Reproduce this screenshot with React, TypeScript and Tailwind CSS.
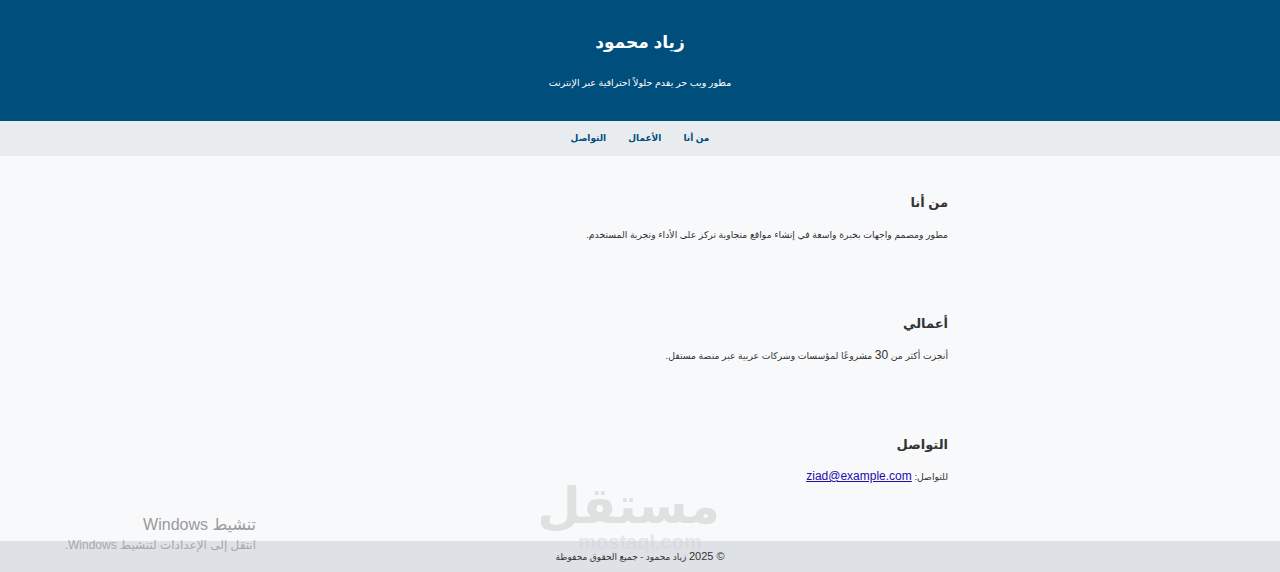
export default function App() {
  return (
    <div
      dir="rtl"
      className="relative min-h-[572px] bg-[#f8f9fa] text-[#333] font-['Liberation_Sans','DejaVu_Sans',sans-serif] overflow-hidden"
    >
      <header className="h-[121px] bg-[#004e7c] text-white text-center pt-[31px]">
        <h1 className="text-[17px] font-bold leading-6">زياد محمود</h1>
        <p className="mt-[20px] text-[9.5px] leading-4">مطور ويب حر يقدم حلولاً احترافية عبر الإنترنت</p>
      </header>

      <nav className="h-[35px] bg-[#e9ecef] flex items-center justify-center gap-[22px] text-[9px] font-bold text-[#004e7c]">
        <a href="#about">من أنا</a>
        <a href="#projects">الأعمال</a>
        <a href="#contact">التواصل</a>
      </nav>

      <main className="w-[616px] mx-auto pb-[22px]">
        <section id="about" className="pt-[37px] pb-[35px]">
          <h2 className="text-[13px] font-bold leading-5">من أنا</h2>
          <p className="mt-[15px] h-[14px] text-[9.3px] leading-[14px]">
            مطور ومصمم واجهات بخبرة واسعة في إنشاء مواقع متجاوبة تركز على الأداء وتجربة المستخدم.
          </p>
        </section>
        <section id="projects" className="pt-[37px] pb-[35px]">
          <h2 className="text-[13px] font-bold leading-5">أعمالي</h2>
          <p className="mt-[15px] h-[14px] text-[9.3px] leading-[14px]">
            أنجزت أكثر من <span className="text-[12px] leading-none">30</span> مشروعًا لمؤسسات وشركات عربية عبر منصة مستقل.
          </p>
        </section>
        <section id="contact" className="pt-[37px] pb-[35px]">
          <h2 className="text-[13px] font-bold leading-5">التواصل</h2>
          <p className="mt-[15px] h-[14px] text-[9.3px] leading-[14px]">
            للتواصل:{" "}
            <a href="mailto:ziad@example.com" className="text-[12px] leading-none text-[#1a0dab] underline">
              ziad@example.com
            </a>
          </p>
        </section>
      </main>

      <footer className="h-[31px] bg-[#dee2e6] flex items-center justify-center text-[9px] text-[#333]">
        <span>
          <span className="text-[11px]">© 2025</span> زياد محمود - جميع الحقوق محفوظة
        </span>
      </footer>

      {/* watermark overlays */}
      <div className="absolute left-[560px] top-[478px] w-[160px] text-center pointer-events-none">
        <div className="text-[50px] font-bold leading-[56px] text-[#dadada] opacity-80 font-['DejaVu_Sans',sans-serif]">مستقل</div>
        <div dir="ltr" className="text-[20px] font-bold leading-5 -mt-[2px] text-[#d2d5d9] opacity-50">mostaql.com</div>
      </div>
      <div className="absolute left-[50px] top-[515px] w-[206px] text-[#9a9a9a] pointer-events-none">
        <div className="text-[16px] leading-5">تنشيط Windows</div>
        <div className="text-[12px] leading-4 mt-[2px] opacity-80">انتقل إلى الإعدادات لتنشيط Windows.</div>
      </div>
    </div>
  );
}
